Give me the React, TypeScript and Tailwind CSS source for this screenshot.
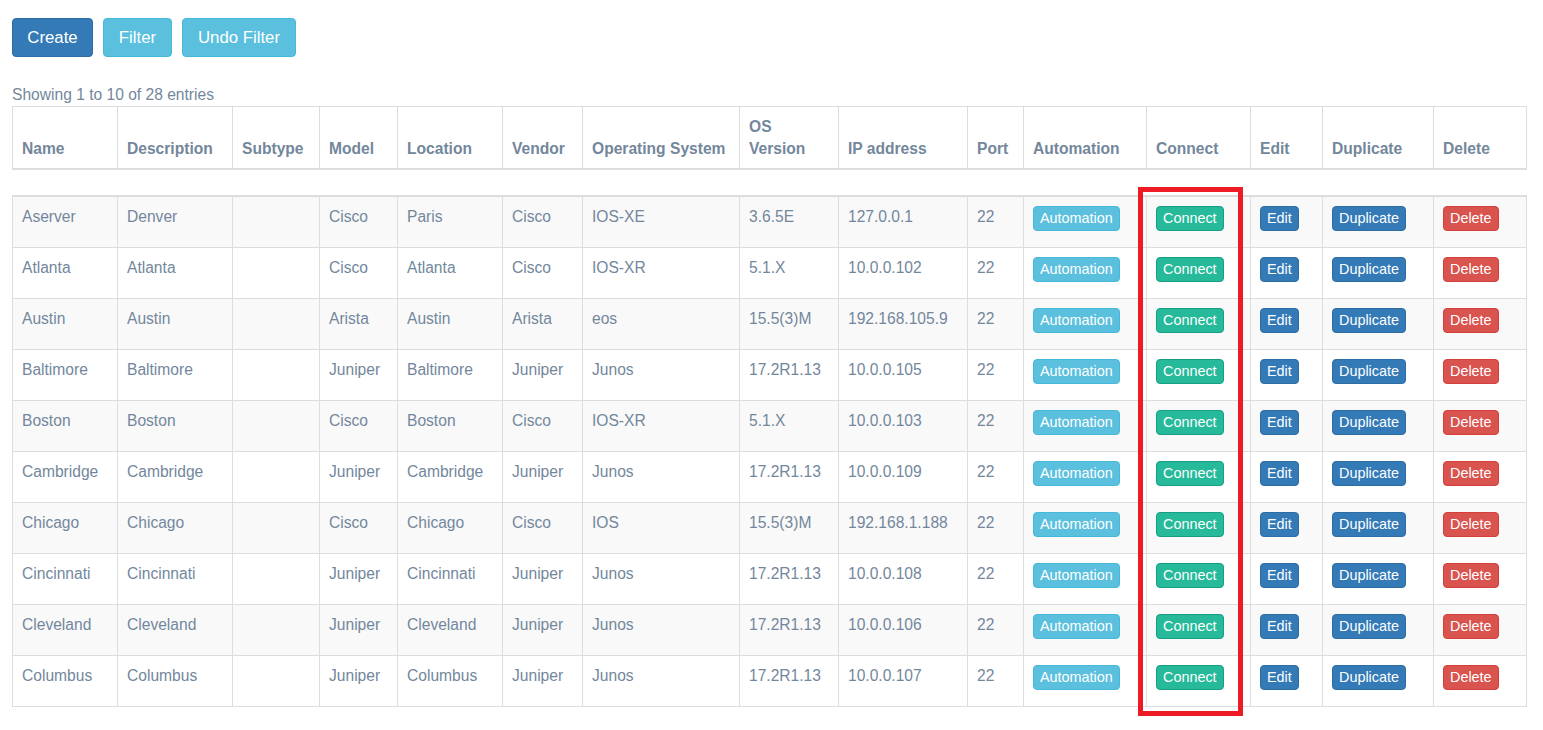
import React from "react";

const cols = [105, 115, 87, 78, 105, 80, 157, 99, 129, 56, 123, 104, 72, 111, 93];

const headers = [
  "Name",
  "Description",
  "Subtype",
  "Model",
  "Location",
  "Vendor",
  "Operating System",
  "OS Version",
  "IP address",
  "Port",
  "Automation",
  "Connect",
  "Edit",
  "Duplicate",
  "Delete",
];

const rows: string[][] = [
  ["Aserver", "Denver", "", "Cisco", "Paris", "Cisco", "IOS-XE", "3.6.5E", "127.0.0.1", "22"],
  ["Atlanta", "Atlanta", "", "Cisco", "Atlanta", "Cisco", "IOS-XR", "5.1.X", "10.0.0.102", "22"],
  ["Austin", "Austin", "", "Arista", "Austin", "Arista", "eos", "15.5(3)M", "192.168.105.9", "22"],
  ["Baltimore", "Baltimore", "", "Juniper", "Baltimore", "Juniper", "Junos", "17.2R1.13", "10.0.0.105", "22"],
  ["Boston", "Boston", "", "Cisco", "Boston", "Cisco", "IOS-XR", "5.1.X", "10.0.0.103", "22"],
  ["Cambridge", "Cambridge", "", "Juniper", "Cambridge", "Juniper", "Junos", "17.2R1.13", "10.0.0.109", "22"],
  ["Chicago", "Chicago", "", "Cisco", "Chicago", "Cisco", "IOS", "15.5(3)M", "192.168.1.188", "22"],
  ["Cincinnati", "Cincinnati", "", "Juniper", "Cincinnati", "Juniper", "Junos", "17.2R1.13", "10.0.0.108", "22"],
  ["Cleveland", "Cleveland", "", "Juniper", "Cleveland", "Juniper", "Junos", "17.2R1.13", "10.0.0.106", "22"],
  ["Columbus", "Columbus", "", "Juniper", "Columbus", "Juniper", "Junos", "17.2R1.13", "10.0.0.107", "22"],
];

function ColGroup() {
  return (
    <colgroup>
      {cols.map((w, i) => (
        <col key={i} style={{ width: w }} />
      ))}
    </colgroup>
  );
}

function XsBtn({ label, cls }: { label: string; cls: string }) {
  return (
    <span
      className={
        "inline-flex h-[25px] items-center rounded-[4px] border px-[6px] mb-[6px] text-[14.4px] leading-none text-white " +
        cls
      }
    >
      {label}
    </span>
  );
}

export default function App() {
  return (
    <div
      className="relative min-h-[730px] bg-white pl-[12px] pt-[18px] text-[#73879C]"
      style={{ fontFamily: '"Liberation Sans", Arial, sans-serif' }}
    >
      <div className="flex gap-[10px]">
        <button className="h-[39px] w-[81px] rounded-[4px] border border-[#2e6da4] bg-[#337ab7] text-[16.8px] text-white">
          Create
        </button>
        <button className="h-[39px] w-[69px] rounded-[4px] border border-[#46b8da] bg-[#5bc0de] text-[16.8px] text-white">
          Filter
        </button>
        <button className="h-[39px] w-[114px] rounded-[4px] border border-[#46b8da] bg-[#5bc0de] text-[16.8px] text-white">
          Undo Filter
        </button>
      </div>

      <div className="mt-[27px] text-[15.6px] leading-[22px]">Showing 1 to 10 of 28 entries</div>

      <table className="w-[1514px] table-fixed border-collapse border border-[#dddddd]">
        <ColGroup />
        <thead>
          <tr>
            {headers.map((h, i) => (
              <th
                key={i}
                className="border border-b-2 border-[#dddddd] pl-[9px] pr-[10px] pt-[9px] pb-[8px] text-left align-bottom text-[15.6px] font-bold leading-[22px]"
              >
                {h === "OS Version" ? (
                  <>
                    OS
                    <br />
                    Version
                  </>
                ) : (
                  h
                )}
              </th>
            ))}
          </tr>
        </thead>
      </table>

      <div className="h-[25px]" />

      <table className="w-[1514px] table-fixed border-collapse border border-t-2 border-[#dddddd]">
        <ColGroup />
        <tbody>
          {rows.map((r, ri) => (
            <tr key={ri} className={ri % 2 === 0 ? "bg-[#f9f9f9]" : "bg-white"}>
              {r.map((c, ci) => (
                <td
                  key={ci}
                  className="border border-[#dddddd] pl-[9px] pr-[10px] pt-[8px] pb-[11px] align-top text-[15.6px] leading-[23px] whitespace-nowrap"
                >
                  {c}
                </td>
              ))}
              <td className="border border-[#dddddd] pl-[9px] pr-[10px] pt-[9px] pb-[10px] align-top">
                <XsBtn label="Automation" cls="bg-[#5bc0de] border-[#46b8da]" />
              </td>
              <td className="border border-[#dddddd] pl-[9px] pr-[10px] pt-[9px] pb-[10px] align-top">
                <XsBtn label="Connect" cls="bg-[#26B99A] border-[#169F85]" />
              </td>
              <td className="border border-[#dddddd] pl-[9px] pr-[10px] pt-[9px] pb-[10px] align-top">
                <XsBtn label="Edit" cls="bg-[#337ab7] border-[#2e6da4]" />
              </td>
              <td className="border border-[#dddddd] pl-[9px] pr-[10px] pt-[9px] pb-[10px] align-top">
                <XsBtn label="Duplicate" cls="bg-[#337ab7] border-[#2e6da4]" />
              </td>
              <td className="border border-[#dddddd] pl-[9px] pr-[10px] pt-[9px] pb-[10px] align-top">
                <XsBtn label="Delete" cls="bg-[#d9534f] border-[#d43f3a]" />
              </td>
            </tr>
          ))}
        </tbody>
      </table>

      <div className="pointer-events-none absolute left-[1138px] top-[187px] h-[529px] w-[105px] border-[5px] border-[#ed1c24]" />
    </div>
  );
}
